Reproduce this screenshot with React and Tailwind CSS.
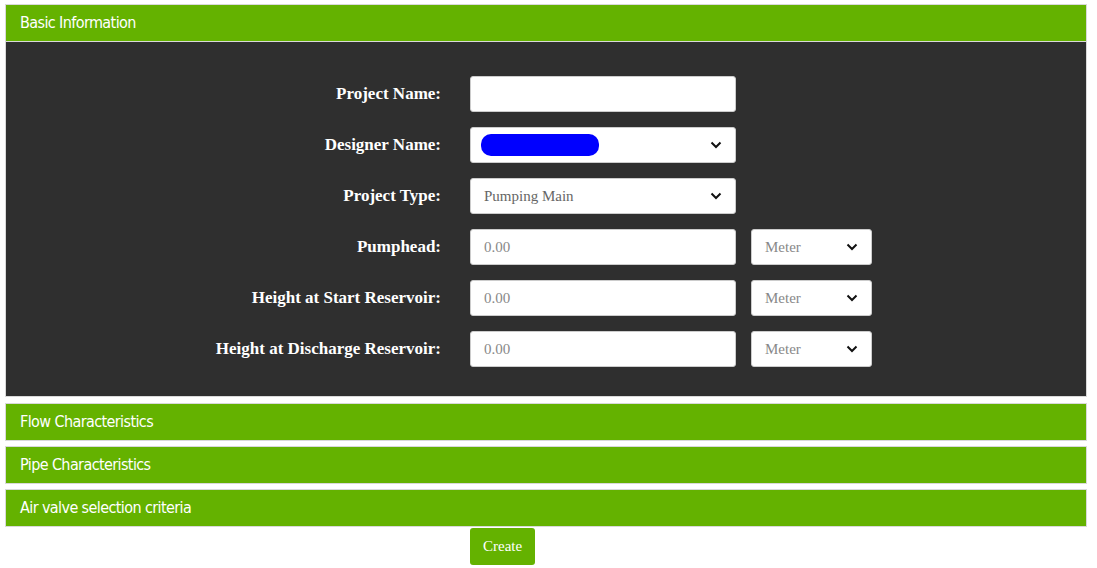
import React from 'react';

const serif = { fontFamily: '"Liberation Serif", "DejaVu Serif", serif' };
const narrow = { fontFamily: '"DejaVu Sans", "Liberation Sans", sans-serif' };

function Chevron() {
  return (
    <svg width="12" height="8" viewBox="0 0 12 8" className="shrink-0">
      <polyline points="1.5,1.5 6,6 10.5,1.5" fill="none" stroke="#111" strokeWidth="2" />
    </svg>
  );
}

function Header({ title }) {
  return (
    <div
      className="h-[38px] bg-[#64b200] border border-[#d9d9d9] flex items-center pl-[14px] text-white text-[16px] font-stretch-condensed tracking-[-0.6px]"
      style={narrow}
    >
      {title}
    </div>
  );
}

function Row({ label, children }) {
  return (
    <div className="flex items-center">
      <div className="w-[435px] text-right text-white font-bold text-[17px]" style={serif}>
        {label}
      </div>
      <div className="ml-[29px] flex items-center gap-[15px]">{children}</div>
    </div>
  );
}

function Field({ value, placeholder, select, blob }) {
  return (
    <div className="w-[266px] h-[36px] bg-white rounded-[3px] border border-[#ccc] flex items-center px-[13px] justify-between">
      {blob ? (
        <div className="w-[118px] h-[22px] bg-[#0000ff] rounded-[10px] -ml-[3px]" />
      ) : (
        <span className={`text-[15px] ${value ? 'text-[#666]' : 'text-[#888]'}`} style={serif}>
          {value || placeholder}
        </span>
      )}
      {select && <Chevron />}
    </div>
  );
}

function Unit() {
  return (
    <div className="w-[121px] h-[36px] bg-white rounded-[3px] border border-[#ccc] flex items-center pl-[13px] pr-[13px] justify-between">
      <span className="text-[15px] text-[#888]" style={serif}>Meter</span>
      <Chevron />
    </div>
  );
}

export default function App() {
  return (
    <div className="bg-white min-h-screen pt-[4px] px-[5px] w-[1092px]">
      <div>
        <Header title="Basic Information" />
        <div className="bg-[#2f2f2f] border border-t-0 border-[#d9d9d9] pt-[34px] pb-[29px] flex flex-col gap-[15px]">
          <Row label="Project Name:"><Field /></Row>
          <Row label="Designer Name:"><Field select blob /></Row>
          <Row label="Project Type:"><Field select value="Pumping Main" /></Row>
          <Row label="Pumphead:"><Field placeholder="0.00" /><Unit /></Row>
          <Row label="Height at Start Reservoir:"><Field placeholder="0.00" /><Unit /></Row>
          <Row label="Height at Discharge Reservoir:"><Field placeholder="0.00" /><Unit /></Row>
        </div>
      </div>
      <div className="mt-[6px] flex flex-col gap-[5px]">
        <Header title="Flow Characteristics" />
        <Header title="Pipe Characteristics" />
        <Header title="Air valve selection criteria" />
      </div>
      <div className="pl-[465px] pt-px">
        <button
          className="h-[37px] px-[13px] bg-[#64b200] text-white text-[15px] rounded-[3px]"
          style={serif}
        >
          Create
        </button>
      </div>
    </div>
  );
}
